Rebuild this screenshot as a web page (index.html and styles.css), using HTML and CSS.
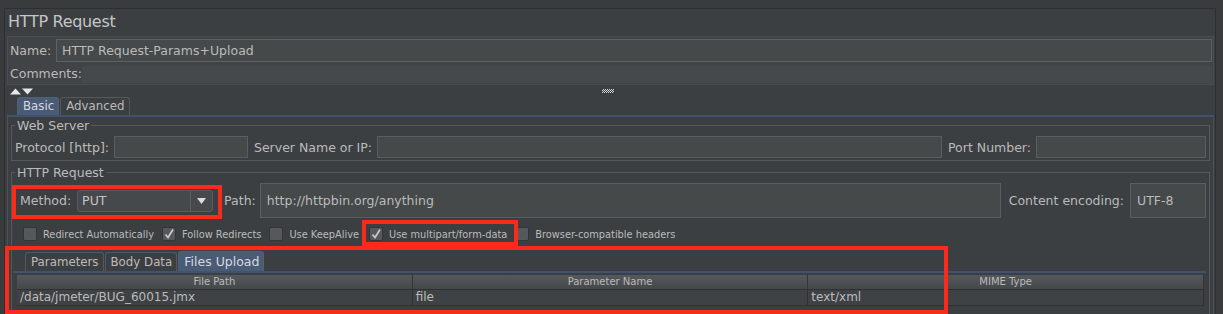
FILE: index.html
```html
<!DOCTYPE html>
<html lang="en">
<head>
    <meta charset="UTF-8">
    <title>HTTP Request</title>
    <link rel="stylesheet" href="styles.css">
</head>
<body>
    <div class="frame">
        <div class="title">HTTP Request</div>
        <div class="name-box">
            <div class="name-row">
                <span class="label">Name:</span>
                <div class="field name-field">HTTP Request-Params+Upload</div>
            </div>
            <div class="comments-row">
                <span class="label">Comments:</span>
                <div class="comments-field"></div>
            </div>
        </div>
        <div class="splitter">
            <svg class="arrows" width="24" height="7" viewBox="0 0 24 7">
                <polygon points="0,6.5 5.5,0.5 11,6.5" fill="#e6e6e6"/>
                <polygon points="12,0.5 23,0.5 17.5,6.5" fill="#e6e6e6"/>
            </svg>
            <span class="grip"></span>
        </div>
        <div class="tab-bar">
            <span class="tab selected">Basic</span>
            <span class="tab">Advanced</span>
        </div>
        <div class="tab-panel">
            <fieldset class="group">
                <legend>Web Server</legend>
                <div class="row">
                    <span class="label">Protocol [http]:</span>
                    <div class="field protocol"></div>
                    <span class="label">Server Name or IP:</span>
                    <div class="field server"></div>
                    <span class="label">Port Number:</span>
                    <div class="field port"></div>
                </div>
            </fieldset>
            <fieldset class="group http">
                <legend>HTTP Request</legend>
                <div class="method-row">
                    <div class="method">
                        <span class="label">Method:</span>
                        <div class="select">
                            <span class="select-value">PUT</span>
                            <span class="select-arrow">
                                <svg width="9" height="6" viewBox="0 0 9 6"><polygon points="0,0 9,0 4.5,6" fill="#dcdcdc"/></svg>
                            </span>
                        </div>
                    </div>
                    <span class="label path-label">Path:</span>
                    <div class="field tall path">http://httpbin.org/anything</div>
                    <span class="label enc-label">Content encoding:</span>
                    <div class="field tall encoding">UTF-8</div>
                </div>
                <div class="check-row">
                    <label class="check"><span class="box"></span>Redirect Automatically</label>
                    <label class="check"><span class="box checked"><svg width="12" height="12" viewBox="0 0 12 12"><path d="M2.5 6.5 L5 9.5 L10 1.5" stroke="#c8c8c8" stroke-width="1.7" fill="none"/></svg></span>Follow Redirects</label>
                    <label class="check wide"><span class="box"></span>Use KeepAlive</label>
                    <label class="check"><span class="box checked"><svg width="12" height="12" viewBox="0 0 12 12"><path d="M2.5 6.5 L5 9.5 L10 1.5" stroke="#c8c8c8" stroke-width="1.7" fill="none"/></svg></span>Use multipart/form-data</label>
                    <label class="check"><span class="box"></span>Browser-compatible headers</label>
                </div>
                <div class="sub-tabs">
                    <span class="tab">Parameters</span>
                    <span class="tab">Body Data</span>
                    <span class="tab selected big">Files Upload</span>
                </div>
                <div class="sub-panel">
                    <div class="grid">
                        <div class="th">File Path</div>
                        <div class="th">Parameter Name</div>
                        <div class="th">MIME Type</div>
                        <div class="td">/data/jmeter/BUG_60015.jmx</div>
                        <div class="td">file</div>
                        <div class="td">text/xml</div>
                    </div>
                </div>
            </fieldset>
        </div>
    </div>

    <div class="mark mark-method"></div>
    <div class="mark mark-multipart"></div>
    <div class="mark mark-upload"></div>
</body>
</html>
```

FILE: styles.css
```css
body {
    margin: 0;
    padding: 8px 0 0 4px;
    height: 314px;
    box-sizing: border-box;
    overflow: hidden;
    position: relative;
    background-color: #393b3d;
    font-family: "DejaVu Sans", sans-serif;
    font-size: 12.5px;
    color: #bbbbbb;
}
.frame {
    width: 1212px;
    height: 306px;
    box-sizing: border-box;
    border: 1px solid #2d2f31;
    border-bottom: none;
    background-color: #3c3f41;
}
.title {
    height: 27px;
    line-height: 25px;
    padding-left: 3px;
    font-size: 16px;
    letter-spacing: -0.3px;
    color: #c6c6c6;
}
.label {
    white-space: nowrap;
}
.field {
    height: 22px;
    box-sizing: border-box;
    border: 1px solid #5a5d5f;
    background-color: #45494a;
    white-space: nowrap;
}
.name-box {
    margin: 0 1px 0 2px;
    padding: 1px 1px 0 2px;
    border: 1px solid #4a4d4f;
    background-color: #414446;
}
.name-row {
    display: flex;
    align-items: center;
    height: 25px;
}
.name-field {
    flex: 1;
    height: 23px;
    margin-left: 5px;
    padding-left: 5px;
    line-height: 21px;
    border-color: #5e6163;
}
.comments-row {
    display: flex;
    height: 21px;
}
.comments-row .label {
    padding-top: 3px;
}
.comments-field {
    flex: 1;
    height: 17px;
    margin-top: 3px;
    background-color: #46494b;
}
.splitter {
    display: flex;
    align-items: center;
    height: 12px;
    padding-left: 5px;
}
.arrows {
    display: block;
}
.grip {
    width: 12px;
    height: 4px;
    margin-left: 568px;
    background: repeating-conic-gradient(#d8d8d8 0 25%, transparent 0 50%) 0 0 / 2px 2px;
}
.tab-bar, .sub-tabs {
    display: flex;
    align-items: flex-end;
}
.tab-bar {
    height: 18px;
    padding-left: 12px;
}
.tab {
    height: 17px;
    line-height: 17px;
    padding: 0 4px 0 5px;
    margin-right: 1px;
    border: 1px solid #55585a;
    border-bottom: none;
    border-radius: 3px 3px 0 0;
    font-size: 11.8px;
    white-space: nowrap;
}
.tab.selected {
    background-color: #4b5b73;
    border-color: #4f6079;
    color: #d4dae3;
}
.tab.big {
    font-size: 12.5px;
}
.tab-panel {
    height: 200px;
    margin: 0 1px 0 2px;
    padding: 0 3px;
    border: 1px solid #4e5153;
    border-top: 2px solid #3f5272;
}
.group {
    margin: 2px 0 0;
    padding: 4px 3px 2px;
    min-width: 0;
    border: 1px solid #56595b;
}
.group legend {
    padding: 0 2px;
    line-height: 13px;
}
.group.http {
    margin-top: 5px;
    padding-bottom: 0;
}
.row {
    display: flex;
    align-items: center;
    height: 22px;
}
.protocol {
    width: 134px;
    margin: 0 6px 0 5px;
}
.server {
    flex: 1;
    margin: 0 6px 0 5px;
}
.port {
    width: 170px;
    margin-left: 5px;
}
.method-row {
    display: flex;
    align-items: center;
    height: 35px;
}
.method {
    display: flex;
    align-items: center;
    padding-left: 5px;
}
.select {
    display: flex;
    width: 136px;
    height: 22px;
    margin-left: 6px;
    box-sizing: border-box;
    border: 1px solid #5a5d5f;
    border-radius: 3px;
    background-color: #46494b;
}
.select-value {
    flex: 1;
    padding-left: 4px;
    line-height: 20px;
    color: #c4c4c4;
}
.select-arrow {
    display: flex;
    align-items: center;
    justify-content: center;
    width: 21px;
    border-left: 1px solid #5a5d5f;
}
.path-label {
    margin-left: 11px;
}
.tall {
    height: 35px;
    line-height: 33px;
    padding-left: 6px;
}
.path {
    flex: 1;
    margin-left: 4px;
}
.enc-label {
    margin-left: 8px;
}
.encoding {
    width: 76px;
    margin-left: 6px;
}
.check-row {
    display: flex;
    align-items: center;
    height: 26px;
    margin-top: 3px;
    padding-left: 8px;
    font-size: 9.8px;
}
.check {
    display: flex;
    align-items: center;
    margin-right: 8px;
    white-space: nowrap;
}
.check.wide {
    margin-right: 10px;
}
.box {
    display: flex;
    align-items: center;
    justify-content: center;
    width: 14px;
    height: 14px;
    margin-right: 6px;
    box-sizing: border-box;
    border: 1px solid #333537;
    border-radius: 2px;
    background-color: #56595b;
}
.sub-tabs {
    height: 19px;
    margin-top: 5px;
    padding-left: 10px;
}
.sub-tabs .tab {
    height: 18px;
    line-height: 18px;
}
.sub-tabs .tab.selected {
    height: 19px;
    line-height: 19px;
}
.sub-panel {
    margin-left: -2px;
    padding: 2px 2px 0 4px;
    border-top: 2px solid #3f5272;
    height: 40px;
}
.grid {
    display: grid;
    grid-template-columns: repeat(3, 1fr);
}
.th {
    height: 14px;
    line-height: 14px;
    text-align: center;
    font-size: 10px;
    background: linear-gradient(#56595c, #45484a);
    border-right: 1px solid #333537;
    border-bottom: 1px solid #2e3032;
}
.td {
    height: 15px;
    line-height: 15px;
    padding-left: 3px;
    font-size: 12px;
    background-color: #3f4244;
    border-right: 1px solid #2f3133;
    border-bottom: 1px solid #2f3133;
}
.mark {
    position: absolute;
    box-sizing: border-box;
    border: 4px solid #fb2b1c;
}
.mark-method {
    left: 12px;
    top: 185px;
    width: 210px;
    height: 34px;
}
.mark-multipart {
    left: 362px;
    top: 220px;
    width: 156px;
    height: 26px;
}
.mark-upload {
    left: 5px;
    top: 246px;
    width: 943px;
    height: 68px;
}
```
